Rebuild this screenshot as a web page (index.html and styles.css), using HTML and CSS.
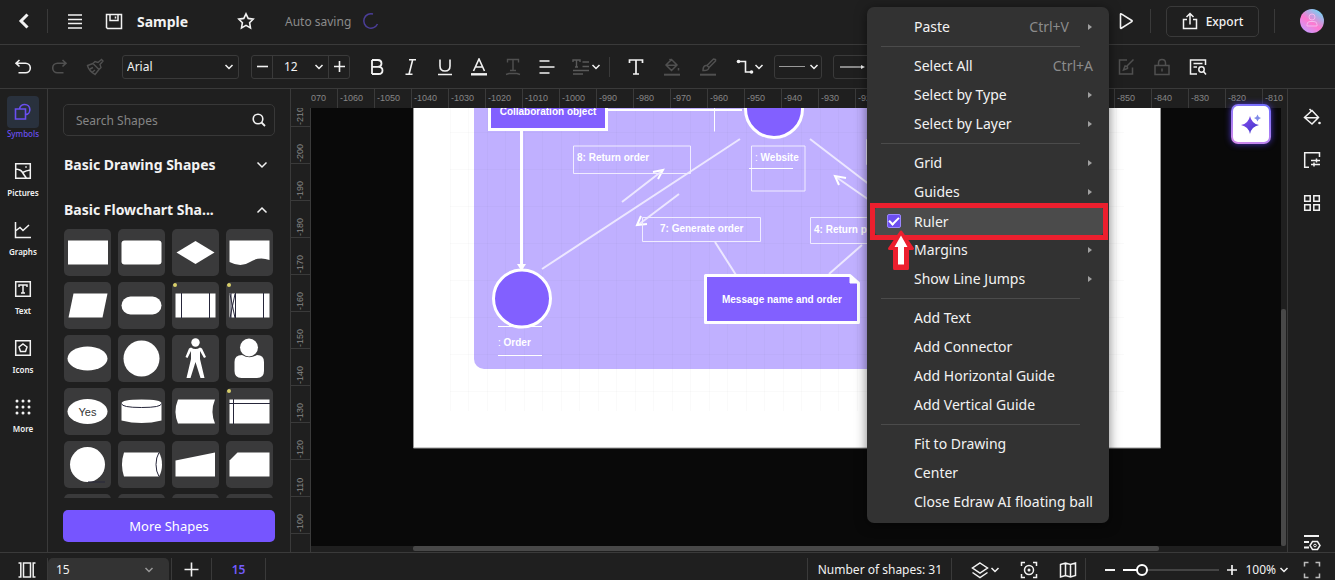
FILE: index.html
```html
<!DOCTYPE html>
<html lang="en">
<head>
<meta charset="utf-8">
<title>Sample</title>
<link rel="stylesheet" href="styles.css">
</head>
<body>
<header class="topbar">
  <button class="ib back" aria-label="Back"><svg width="14" height="16" viewBox="0 0 14 16"><path d="M10.5 1.5 4 8l6.500 6.500" stroke-width="3"/></svg></button>
  <span class="divider"></span>
  <button class="ib menu-btn" aria-label="Menu"><svg width="16" height="16" viewBox="0 0 16 16"><path d="M1 2h14M1 6.500h14M1 10.500h14M1 15h14" stroke-width="1.300"/></svg></button>
  <button class="ib" aria-label="Save"><svg width="18" height="18" viewBox="0 0 18 18"><path d="M1.500 2.500h15v14h-14l-1-1zM5 2.500v6h8v-6M10.500 4.500v2" stroke-width="1.500"/></svg></button>
  <h1 class="doc-title">Sample</h1>
  <button class="ib" aria-label="Favorite"><svg width="18" height="18" viewBox="0 0 18 18"><path d="M9 1.800 11.200 6.400l5 .7-3.600 3.600.9 5.200L9 13.400l-4.500 2.500.9-5.200L1.800 7.100l5-.7z" stroke-width="1.600"/></svg></button>
  <span class="saving">Auto saving</span>
  <svg class="spinner" width="18" height="18" viewBox="0 0 18 18"><path d="M11 2A7.200 7.200 0 1 0 15.500 12" stroke-width="1.500"/></svg>
  <div class="top-right">
    <button class="ib" aria-label="Play"><svg width="18" height="18" viewBox="0 0 18 18"><path d="M3.500 2.200v13.600q0 .8.800.4l10.500-6.600q.7-.6 0-1.100L4.300 1.900q-.8-.4-.8.300z" stroke-width="1.600"/></svg></button>
    <span class="divider"></span>
    <button class="export"><svg width="16" height="18" viewBox="0 0 16 18"><path d="M5 7.500H1.500v9h13v-9H11M8 12.500V2M4.500 5 8 1.500 11.500 5" stroke-width="1.500"/></svg>Export</button>
    <span class="divider"></span>
    <button class="avatar" aria-label="Account"><svg width="24" height="24" viewBox="0 0 24 24"><circle cx="12" cy="8" r="3"/><path d="M7 17v-1.500q0-3 3-3h4q3 0 3 3V17z"/></svg></button>
  </div>
</header>

<div class="toolbar">
  <div class="group w36">
    <button class="ib" aria-label="Undo"><svg width="18" height="18" viewBox="0 0 18 18"><path d="M5.500 2 2 5.200l3.500 3.300M2 5.200h9.500a4.800 4.800 0 0 1 0 9.600H4.500" stroke-width="1.600"/></svg></button>
    <button class="ib off" aria-label="Redo"><svg width="18" height="18" viewBox="0 0 18 18"><path d="M12.500 2 16 5.200l-3.500 3.300M16 5.200H7.500a4.800 4.800 0 0 0 0 9.600h6" stroke-width="1.600"/></svg></button>
    <button class="ib off" aria-label="Format painter"><svg width="18" height="18" viewBox="0 0 18 18"><path d="m15.500 1.500-3.500 3-3-1-2 2 6 6 2-2-1-3 3-3.500zM7 5.500 1.500 7.500q1 5 7.500 9l4-5M4 11l3-1.500M6.500 14l2.500-2" stroke-width="1.400"/></svg></button>
  </div>
  <label class="pick font-pick"><select aria-label="Font"><option>Arial</option></select><svg class="chev" width="10" height="6" viewBox="0 0 10 6"><path d="m1.500 1 3.500 3.500L8.500 1"/></svg></label>
  <div class="stepper">
    <button class="ib" aria-label="Smaller"><svg width="13" height="13" viewBox="0 0 13 13"><path d="M1 6.500h11" stroke-width="1.600"/></svg></button>
    <label class="pick"><select aria-label="Font size"><option>12</option></select><svg class="chev" width="10" height="6" viewBox="0 0 10 6"><path d="m1.500 1 3.500 3.500L8.500 1"/></svg></label>
    <button class="ib" aria-label="Larger"><svg width="13" height="13" viewBox="0 0 13 13"><path d="M1 6.500h11M6.500 1v11" stroke-width="1.600"/></svg></button>
  </div>
  <div class="group w34">
    <button class="ib" aria-label="Bold"><svg width="18" height="18" viewBox="0 0 18 18"><path d="M4 2v14M4 2h6q3.500.2 3.500 3.400T10 8.800H4h6.500q4 .2 4 3.600t-4 3.600H4" stroke-width="1.800"/></svg></button>
    <button class="ib" aria-label="Italic"><svg width="18" height="18" viewBox="0 0 18 18"><path d="M7 1.800h7M3.500 16.200h7M10.700 1.800 7 16.200" stroke-width="1.600"/></svg></button>
    <button class="ib" aria-label="Underline"><svg width="18" height="18" viewBox="0 0 18 18"><path d="M4 1.500v6.500q0 5 5 5t5-5V1.500M2 16.500h14" stroke-width="1.600"/></svg></button>
    <button class="ib" aria-label="Font color"><svg width="18" height="18" viewBox="0 0 18 18"><path d="M3.500 13 9 1l5.500 12M5.300 9h7.400" stroke-width="1.600"/><path d="M1 16.300h16" stroke-width="2.400"/></svg></button>
    <button class="ib off" aria-label="Text outline"><svg width="18" height="18" viewBox="0 0 18 18"><path d="M3.500 4.500V1.500h11v3M9 1.500v11M6 12.500h6M2 16.500l3-1h8l3 1" stroke-width="1.400"/></svg></button>
    <button class="ib" aria-label="Align"><svg width="18" height="18" viewBox="0 0 18 18"><path d="M1.500 3h10M1.500 9h15M1.500 15h10" stroke-width="1.700"/></svg></button>
  </div>
  <button class="ib spacing" aria-label="Text spacing"><svg class="dim" width="18" height="18" viewBox="0 0 18 18"><path d="M1 4V2h7v2M4.500 2v7M3 9h3M10.500 4H17M10.500 8.500H17M1 12.500h16M1 16h10" stroke-width="1.400"/></svg><svg class="chev" width="10" height="6" viewBox="0 0 10 6"><path d="m1.500 1 3.500 3.500L8.500 1"/></svg></button>
  <span class="divider short"></span>
  <div class="group w36 after">
    <button class="ib" aria-label="Text"><svg width="18" height="18" viewBox="0 0 18 18"><path d="M2.500 5V2h13v3M9 2v14M6 16h6" stroke-width="1.700"/></svg></button>
    <button class="ib off" aria-label="Fill"><svg width="18" height="18" viewBox="0 0 18 18"><path d="m6.500 1 2 2M8.500 1.500 14 7l-5.500 5.500L3 7zM3.500 7.300h10M15.500 10v2.500" stroke-width="1.500"/><path d="M1 16.700h16" stroke-width="2"/></svg></button>
    <button class="ib off" aria-label="Line color"><svg width="18" height="18" viewBox="0 0 18 18"><path d="M16.500 1.500 14.500 1 8 7.500l2 2 6.500-6.500zM8 7.500Q4 7 4 12.500q5.500.5 6-3" stroke-width="1.500"/><path d="M1 16.700h16" stroke-width="2"/></svg></button>
  </div>
  <button class="ib connector" aria-label="Connector"><svg width="18" height="16" viewBox="0 0 18 16"><path d="M3 2.500h6.500v10.500H15" stroke-width="1.600"/><circle cx="2.500" cy="2.500" r="1.800" class="solid"/><circle cx="15.500" cy="13" r="1.800" class="solid"/></svg><svg class="chev" width="10" height="6" viewBox="0 0 10 6"><path d="m1.500 1 3.500 3.500L8.500 1"/></svg></button>
  <button class="box-btn" aria-label="Line style"><svg class="mid" width="28" height="4" viewBox="0 0 28 4"><path d="M1 1.500h26" stroke-width="1"/></svg><svg class="chev" width="10" height="6" viewBox="0 0 10 6"><path d="m1.500 1 3.500 3.500L8.500 1"/></svg></button>
  <button class="box-btn second" aria-label="Arrow style"><svg width="28" height="8" viewBox="0 0 28 8"><path d="M1 4h22" stroke-width="1"/><path class="solid" d="m22 2 4 2-4 2z"/></svg></button>
  <div class="group w36 end">
    <button class="ib off" aria-label="Edit"><svg width="18" height="18" viewBox="0 0 18 18"><path d="M10 2H2.500v14h13V9.500M16.500 1.500 10 8M6.500 12l1.500-4q3 0 2.500 2.500z" stroke-width="1.500"/></svg></button>
    <button class="ib off" aria-label="Lock"><svg width="18" height="18" viewBox="0 0 18 18"><path d="M2 7.500h14v9H2zM5.500 7.500V5q0-3.500 3.500-3.500T12.500 5v2.500M9 10.500v3" stroke-width="1.500"/></svg></button>
    <button class="ib" aria-label="Find"><svg width="18" height="18" viewBox="0 0 18 18"><path d="M16.500 7V2h-15v14H8M4.500 5.500h9M4.500 9h3.500" stroke-width="1.500"/><circle cx="12.500" cy="11.500" r="2.700" stroke-width="1.500"/><path d="m14.500 13.500 2.500 3" stroke-width="1.500"/></svg></button>
  </div>
</div>

<main class="workspace">
  <nav class="rail">
    <button class="rail-item active"><span class="tile"><svg width="18" height="18" viewBox="0 0 18 18"><path d="M1.500 6h10v10h-10zM5.500 6A5.200 5.200 0 1 1 11.500 11.800" stroke-width="1.600"/></svg></span>Symbols</button>
    <button class="rail-item"><span class="tile"><svg width="18" height="18" viewBox="0 0 18 18"><path d="M1.700 1.700h14.600v14.600H1.700zM1.700 7q5 .5 6.500 3t4.300 6.300M8.500 10.500q4-2 7.800-2.500M12 4.200v1.500" stroke-width="1.500"/></svg></span>Pictures</button>
    <button class="rail-item"><span class="tile"><svg width="18" height="18" viewBox="0 0 18 18"><path d="M1.500 1v15.500H17M1.500 10 6 6.500l3 3 6-5.500" stroke-width="1.500"/></svg></span>Graphs</button>
    <button class="rail-item"><span class="tile"><svg width="18" height="18" viewBox="0 0 18 18"><path d="M1.700 1.700h14.600v14.600H1.700zM5 7V5h8v2M9 5v8M7 13h4" stroke-width="1.500"/></svg></span>Text</button>
    <button class="rail-item"><span class="tile"><svg width="18" height="18" viewBox="0 0 18 18"><path d="M1.700 1.700h14.600v14.600H1.700zM9 5l4 3-1.500 4.500h-5L5 8z" stroke-width="1.500"/></svg></span>Icons</button>
    <button class="rail-item"><span class="tile"><svg width="18" height="18" viewBox="0 0 18 18"><g class="solid"><circle cx="3" cy="3" r="1.500"/><circle cx="9" cy="3" r="1.500"/><circle cx="15" cy="3" r="1.500"/><circle cx="3" cy="9" r="1.500"/><circle cx="9" cy="9" r="1.500"/><circle cx="15" cy="9" r="1.500"/><circle cx="3" cy="15" r="1.500"/><circle cx="9" cy="15" r="1.500"/><circle cx="15" cy="15" r="1.500"/></g></svg></span>More</button>
  </nav>

  <aside class="panel">
    <label class="search"><input type="text" placeholder="Search Shapes" aria-label="Search Shapes"><svg width="14" height="14" viewBox="0 0 14 14"><circle cx="6" cy="6" r="4.800" stroke-width="1.600"/><path d="m9.500 9.500 3.500 3.500" stroke-width="1.800"/></svg></label>
    <button class="section">Basic Drawing Shapes<svg width="12" height="8" viewBox="0 0 12 8"><path d="m1.500 1.500 4.500 4.500 4.500-4.500" stroke-width="1.500"/></svg></button>
    <button class="section">Basic Flowchart Sha...<svg width="12" height="8" viewBox="0 0 12 8"><path d="m1.500 6.500 4.500-4.500 4.500 4.500" stroke-width="1.500"/></svg></button>
    <div class="shapes">
      <svg viewBox="0 0 47 47"><path d="M4 11.500h40v24H4z"/></svg>
      <svg viewBox="0 0 47 47"><rect x="3.500" y="11.500" width="40" height="24" rx="3"/></svg>
      <svg viewBox="0 0 47 47"><path d="M4.500 23.500 23.500 12l19 11.500L23.500 35z"/></svg>
      <svg viewBox="0 0 47 47"><path d="M3.500 11.500h40V31Q33 27 24 33t-20.500 0z"/></svg>
      <svg viewBox="0 0 47 47"><path d="M9.500 11.500h34l-5 24h-34z"/></svg>
      <svg viewBox="0 0 47 47"><rect x="3.500" y="14.500" width="40" height="18" rx="9"/></svg>
      <svg viewBox="0 0 47 47"><circle class="dot" cx="3" cy="3" r="2"/><path d="M3.500 11.500h40v24h-40z"/><path class="ink" d="M9.500 11v25M37.500 11v25"/></svg>
      <svg viewBox="0 0 47 47"><circle class="dot" cx="3" cy="3" r="2"/><path d="M3.500 11.500h40v24h-40z"/><path class="ink" d="M9.500 11v25M37.500 11v25M4 12l5 24M9 12 4 36M5 11v25"/></svg>
      <svg viewBox="0 0 47 47"><ellipse cx="23.500" cy="23.500" rx="20" ry="12"/></svg>
      <svg viewBox="0 0 47 47"><circle cx="23.500" cy="23.500" r="18"/></svg>
      <svg viewBox="0 0 47 47"><circle cx="23.500" cy="7.500" r="4.200"/><path d="M19 12.500q4.500 3 9 0l2 1 4 8.500-2 1-4-7v8l4.500 19h-4l-5-16-5 16h-4L19 24v-8l-3.500 7-2-1 3.500-8.500z"/></svg>
      <svg viewBox="0 0 47 47"><path d="M16 20q7.500 4.500 15 0 7 0 7 7v9q0 7-7 7H15.500q-7 0-7-7v-9q0-7 7.500-7z"/><circle cx="23" cy="12.500" r="9"/></svg>
      <svg viewBox="0 0 47 47"><ellipse cx="23.500" cy="23.500" rx="20" ry="12.500"/><text class="yes" x="23.500" y="27.500">Yes</text></svg>
      <svg viewBox="0 0 47 47"><path d="M3.500 15.500q0-4 20-4t20 4v17q-20 5-40 0z"/><path class="ink" d="M3.500 15.500q0 4 20 4t20-4"/></svg>
      <svg viewBox="0 0 47 47"><path d="M6 11.500h37q-5 12 0 24H6q-5-12 0-24z"/></svg>
      <svg viewBox="0 0 47 47"><circle class="dot" cx="3" cy="3" r="2"/><path d="M3.500 11.500h40v24h-40z"/><path class="ink" d="M7.500 11v25M3 15.500h41"/></svg>
      <svg viewBox="0 0 47 47"><circle cx="23.500" cy="23.500" r="17.500"/><path class="ink" d="M24 41h17"/></svg>
      <svg viewBox="0 0 47 47"><path d="M6 11.500h35q3 5 3 12t-3 12H6q-4-12 0-24z"/><path class="ink" d="M41 11.500q-3 5-3 12t3 12"/></svg>
      <svg viewBox="0 0 47 47"><path d="M3.500 19.500 43 11.500v24H3.500z"/></svg>
      <svg viewBox="0 0 47 47"><path d="m3.500 19.500 8-8h32v24h-40z"/></svg>
      <svg viewBox="0 0 47 47"></svg><svg viewBox="0 0 47 47"></svg><svg viewBox="0 0 47 47"></svg><svg viewBox="0 0 47 47"></svg>
    </div>
    <button class="more-shapes">More Shapes</button>
  </aside>

  <section class="stage">
    <div class="ruler-h"><span>070</span><span>-1060</span><span>-1050</span><span>-1040</span><span>-1030</span><span>-1020</span><span>-1010</span><span>-1000</span><span>-990</span><span>-980</span><span>-970</span><span>-960</span><span>-950</span><span>-940</span><span>-930</span><span>-920</span><span>-910</span><span>-900</span><span>-890</span><span>-880</span><span>-870</span><span>-860</span><span>-850</span><span>-840</span><span>-830</span><span>-820</span><span>-810</span></div>
    <div class="ruler-v"><span>-210</span><span>-200</span><span>-190</span><span>-180</span><span>-170</span><span>-160</span><span>-150</span><span>-140</span><span>-130</span><span>-120</span><span>-110</span><span>-100</span><span></span></div>
    <div class="canvas">
      <svg class="drawing" role="img" aria-label="Collaboration diagram">
        <defs><pattern id="grid" width="37" height="37" patternUnits="userSpaceOnUse" x="450" y="132"><path d="M.5 0v37M0 .5h37M18.500 0v37" stroke="#000" stroke-opacity=".018" fill="none"/></pattern></defs>
        <g transform="translate(-311 -108)">
          <path d="M413.500 90v358h747V90z" fill="#fff" stroke="#999"/>
          <rect x="474" y="80" width="616" height="289" rx="10" fill="#c0b0ff"/>
          <rect x="450" y="95" width="674" height="316" fill="url(#grid)"/>
          <g stroke="#ece7ff" stroke-width="2" fill="none">
            <path d="M542 269 740 139M622 202l40-31M679 194l-41 31M715 242l21 33M829 274l33-29M810 139l60 46M836 177l36 25"/>
            <path d="M653 172l10-2-5 9M641 216l-4 9 10-1M846 178l-11-2 4 9" stroke="#fff"/>
          </g>
          <path d="M608 110h134" stroke="#fff" stroke-width="2"/>
          <path d="M714.500 108v23.500" stroke="#fff"/>
          <g fill="none" stroke="#f0ecff" stroke-width="1">
            <path d="M573.500 146h117v27.500h-117zM751.500 146h53.500v45h-53.500zM642.500 217.500h118v24h-118zM810.500 217.500h100v26h-100zM866.500 139.500h90v25h-90z"/>
            <path d="M749 168.500h44M498 326.500h44M498 355.500h44" stroke="#fff"/>
          </g>
          <rect x="489.500" y="80" width="117" height="49.500" fill="#8260ff" stroke="#fff" stroke-width="3"/>
          <circle cx="774" cy="109" r="28.500" fill="#8260ff" stroke="#fff" stroke-width="3"/>
          <path d="M521.500 131v135" stroke="#fff" stroke-width="3"/><path d="M517 264h9l-4.500 7z" fill="#fff"/>
          <circle cx="522" cy="298.500" r="28.500" fill="#8260ff" stroke="#fff" stroke-width="3"/>
          <path d="M705.500 275.500H850l8.500 7.500v39.500h-153z" fill="#8260ff" stroke="#fff" stroke-width="3" stroke-linejoin="round"/>
          <path d="M850 275v8h9z" fill="#fff" stroke="#fff" stroke-linejoin="round"/>
          <g class="labels">
            <text x="548" y="115" text-anchor="middle">Collaboration object</text>
            <text x="577" y="161">8: Return order</text>
            <text x="755" y="161"><tspan class="reg">:</tspan> Website</text>
            <text x="660" y="232">7: Generate order</text>
            <text x="814" y="233">4: Return product</text>
            <text x="498" y="346"><tspan class="reg">:</tspan> Order</text>
            <text x="782" y="303" text-anchor="middle">Message name and order</text>
          </g>
        </g>
      </svg>
      <button class="ai" aria-label="AI assistant"><svg width="36" height="36" viewBox="0 0 36 36"><defs><linearGradient id="spark" x1="0" y1="0" x2="1" y2="1"><stop offset="0" stop-color="#8a4df0"/><stop offset="1" stop-color="#3a35c8"/></linearGradient></defs><path fill="url(#spark)" d="M17 10q1.500 7.500 9 9-7.500 1.500-9 9-1.500-7.500-9-9 7.500-1.500 9-9z"/><path fill="#7f8be8" d="M24.500 8.500q.7 3 3.500 3.500-2.800.5-3.500 3.500-.7-3-3.500-3.500 2.800-.5 3.500-3.500z"/></svg></button>
    </div>
    <div class="scroll-v"><i></i></div>
    <div class="scroll-h"><i></i></div>
  </section>

  <aside class="side">
    <button class="ib" aria-label="Fill"><svg width="18" height="18" viewBox="0 0 18 18"><path d="m6.500 1 2.500 2.500M9 2.500 15.500 9.500 9 16 1.500 9.500zM2 9.800h13" stroke-width="1.500"/><circle cx="16.500" cy="15" r="1.300" class="solid"/></svg></button>
    <button class="ib" aria-label="Page settings"><svg width="18" height="18" viewBox="0 0 18 18"><path d="M16.500 6V1.700H1.700v14.600H6M8 9.500h9M8 13.500h9M13.500 7.500v4M11 11.500v4" stroke-width="1.500"/></svg></button>
    <button class="ib" aria-label="Components"><svg width="18" height="18" viewBox="0 0 18 18"><path d="M1.700 1.700h5.500v5.500H1.700zM10.800 1.700h5.500v5.500h-5.500zM1.700 10.800h5.500v5.500H1.700zM10.800 10.800h5.500v5.500h-5.500z" stroke-width="1.500"/></svg></button>
    <button class="ib last" aria-label="Settings"><svg width="18" height="18" viewBox="0 0 18 18"><path d="M1 2h15M1 8h5M1 13.500h5" stroke-width="1.800"/><path d="M9.500 7.500h5l2.500 4-2.500 4h-5l-2.500-4z" stroke-width="1.500"/><circle cx="12" cy="11.500" r="1.300"/></svg></button>
  </aside>
</main>

<footer class="status">
  <button class="ib pages" aria-label="Pages"><svg width="18" height="18" viewBox="0 0 18 18"><path d="M5.500 2h7v14h-7zM.5 2h2.300v14H.5M17.500 2h-2.300v14h2.300" stroke-width="1.500"/></svg></button>
  <span class="divider"></span>
  <label class="pick page-pick"><select aria-label="Page"><option>15</option></select><svg class="chev" width="10" height="6" viewBox="0 0 10 6"><path d="m1.500 1 3.500 3.500L8.500 1"/></svg></label>
  <span class="divider gap2"></span>
  <button class="ib add" aria-label="Add page"><svg width="15" height="15" viewBox="0 0 15 15"><path d="M.5 7.500h14M7.500.5v14" stroke-width="1.600"/></svg></button>
  <span class="divider"></span>
  <button class="tab">15</button>
  <span class="divider"></span>
  <div class="status-right">
    <span class="divider"></span>
    <span class="count">Number of shapes: 31</span>
    <span class="divider"></span>
    <button class="ib layers" aria-label="Layers"><svg width="18" height="18" viewBox="0 0 18 18"><path d="M9 2 16.500 7 9 12 1.500 7zM1.500 11.500 9 16.500l7.500-5" stroke-width="1.500"/></svg><svg class="chev" width="10" height="6" viewBox="0 0 10 6"><path d="m1.500 1 3.500 3.500L8.500 1"/></svg></button>
    <button class="ib" aria-label="Focus"><svg width="18" height="18" viewBox="0 0 18 18"><path d="M1.500 5V1.500H5M13 1.500h3.500V5M16.500 13v3.500H13M5 16.500H1.500V13" stroke-width="1.500"/><circle cx="9" cy="9" r="4.500" stroke-width="1.500"/><circle cx="9" cy="9" r="1.500" class="solid"/></svg></button>
    <button class="ib" aria-label="Overview"><svg width="18" height="18" viewBox="0 0 18 18"><path d="m1.500 3.500 5-1.500 5 1.500 5-1.500v12.500l-5 1.500-5-1.500-5 1.500zM6.500 2v12.500M11.500 3.500V16" stroke-width="1.500"/></svg></button>
    <span class="divider"></span>
    <div class="zoom">
      <button class="ib" aria-label="Zoom out"><svg width="10" height="10" viewBox="0 0 10 10"><path d="M0 5h10" stroke-width="2"/></svg></button>
      <input class="slider" type="range" min="0" max="100" value="15" aria-label="Zoom">
      <button class="ib" aria-label="Zoom in"><svg width="10" height="10" viewBox="0 0 10 10"><path d="M0 5h10M5 0v10" stroke-width="1.700"/></svg></button>
      <button class="ib pct">100%<svg class="chev" width="10" height="6" viewBox="0 0 10 6"><path d="m1.500 1 3.500 3.500L8.500 1"/></svg></button>
    </div>
    <button class="ib full" aria-label="Full screen"><svg width="18" height="18" viewBox="0 0 18 18"><path d="M1.500 5.500v-4h4M12.500 1.500h4v4M16.500 12.500v4h-4M5.500 16.500h-4v-4" stroke-width="1.500"/></svg></button>
  </div>
</footer>

<div class="context" role="menu">
  <button role="menuitem"><span>Paste</span><kbd>Ctrl+V</kbd><i></i></button>
  <hr>
  <button role="menuitem"><span>Select All</span><kbd>Ctrl+A</kbd></button>
  <button role="menuitem"><span>Select by Type</span><i></i></button>
  <button role="menuitem"><span>Select by Layer</span><i></i></button>
  <hr>
  <button role="menuitem"><span>Grid</span><i></i></button>
  <button role="menuitem"><span>Guides</span><i></i></button>
  <label class="ruler-item"><span class="hover"><input type="checkbox" checked><span>Ruler</span></span><b class="callout"></b>
    <svg class="pointer" width="30" height="44" viewBox="0 0 30 44"><path d="M15 3 26.500 19.500H21.500V39.500H8.500V19.500H3.500z" fill="#ec1f2e" stroke="#ec1f2e" stroke-width="3" stroke-linejoin="round"/><path d="m15 6.500 6.500 11.500h-3.500v17.500h-6V18H8.500z" fill="#fff"/></svg></label>
  <button role="menuitem"><span>Margins</span><i></i></button>
  <button role="menuitem"><span>Show Line Jumps</span><i></i></button>
  <hr>
  <button role="menuitem"><span>Add Text</span></button>
  <button role="menuitem"><span>Add Connector</span></button>
  <button role="menuitem"><span>Add Horizontal Guide</span></button>
  <button role="menuitem"><span>Add Vertical Guide</span></button>
  <hr>
  <button role="menuitem"><span>Fit to Drawing</span></button>
  <button role="menuitem"><span>Center</span></button>
  <button role="menuitem"><span>Close Edraw AI floating ball</span></button>
</div>
</body>
</html>
```
FILE: styles.css
```css
:root {
  --bg: #1f1f1f;
  --line: #3a3a3a;
  --text: #f2f2f2;
  --accent: #7655ff;
}
* { box-sizing: border-box; }
body {
  margin: 0;
  height: 100vh;
  overflow: hidden;
  display: flex;
  flex-direction: column;
  background: var(--bg);
  color: var(--text);
  font-family: "Noto Sans", "Open Sans", sans-serif;
  font-size: 13px;
}
button, input, select { font: inherit; color: inherit; }
button { border: 0; padding: 0; background: none; }
svg { flex: none; display: block; }
svg path, svg circle { fill: none; stroke: currentColor; }
svg .solid, svg .solid circle { fill: currentColor; stroke: none; }
.chev path { stroke-width: 1.5px; }
.ib { display: flex; align-items: center; justify-content: center; flex: none; }
.off { color: #505050; }
.dim { color: #5a5a5a; }
.divider { flex: none; width: 1px; height: 24px; background: var(--line); }

/* Title bar */
.topbar {
  flex: none;
  display: flex;
  align-items: center;
  height: 45px;
  padding-bottom: 2px;
  border-bottom: 1px solid var(--line);
}
.back { width: 47px; }
.menu-btn { width: 54px; }
.topbar > .ib:nth-of-type(3) { width: 24px; }
.doc-title { margin: 0 0 0 11px; width: 100px; font-size: 14px; font-weight: 700; }
.saving { margin-left: 30px; width: 77px; color: #8b8b8b; font-size: 12px; }
.spinner { color: #4b3e98; }
.top-right { display: flex; align-items: center; gap: 15px; margin-left: auto; padding-right: 11px; }
.export {
  display: flex;
  align-items: center;
  justify-content: center;
  gap: 8px;
  width: 93px;
  height: 31px;
  border: 1px solid var(--line);
  border-radius: 5px;
  font-size: 12px;
  font-weight: 500;
}
.avatar { margin-left: 10px; border-radius: 50%; background: linear-gradient(35deg, #c79bff 10%, #ff79d0 45%, #6fd6f5 90%); color: #f5b8ee; }

/* Toolbar */
.toolbar {
  flex: none;
  display: flex;
  align-items: center;
  height: 44px;
  padding-left: 5px;
  border-bottom: 1px solid var(--line);
}
.group { display: flex; flex: none; }
.w36 .ib { width: 36px; }
.w34 { margin-left: 10px; }
.w34 .ib { width: 34px; }
.after { margin-left: 8px; }
.end { margin-left: auto; padding-right: 119px; }
.pick { position: relative; display: flex; align-items: center; }
.pick select { appearance: none; width: 100%; border: 0; background: none; padding: 0 0 0 4px; outline: 0; font-size: 12px; line-height: 20px; }
.pick .chev { position: absolute; right: 4px; }
.font-pick { width: 117px; height: 24px; margin-left: 9px; border: 1px solid var(--line); border-radius: 3px; }
.stepper { display: flex; height: 24px; margin-left: 12px; border: 1px solid var(--line); border-radius: 3px; }
.stepper .ib { width: 20px; }
.stepper .pick { width: 57px; border: solid var(--line); border-width: 0 1px; }
.stepper select { padding-left: 11px; }
.spacing { width: 45px; gap: 1px; }
.short { height: 20px; }
.connector { width: 48px; }
.box-btn { flex: none; display: flex; align-items: center; justify-content: center; gap: 3px; width: 48px; height: 24px; border: 1px solid var(--line); border-radius: 3px; }
.mid { color: #999; }
.second { margin-left: 11px; justify-content: start; padding-left: 5px; }

/* Workspace */
.workspace { flex: 1; min-height: 0; display: flex; }
.rail { flex: none; width: 48px; padding: 7px 1px 0 0; display: flex; flex-direction: column; align-items: center; gap: 16px; border-right: 1px solid var(--line); }
.rail-item { display: flex; flex-direction: column; align-items: center; font-size: 8px; font-weight: 600; line-height: 11px; }
.tile { display: grid; place-items: center; width: 32px; height: 32px; border-radius: 4px; }
.active { color: #6a4ff0; font-weight: 500; }
.active .tile { background: #29313d; }
.panel { flex: none; width: 243px; padding: 15px 15px 10px; display: flex; flex-direction: column; border-right: 1px solid var(--line); }
.search { flex: none; display: flex; align-items: center; height: 32px; padding: 0 8px 0 12px; border: 1px solid #383838; border-radius: 5px; }
.search input { flex: 1; min-width: 0; padding: 0; border: 0; outline: 0; background: none; font-size: 12px; }
.search input::placeholder { color: #858585; opacity: 1; }
.section { flex: none; display: flex; align-items: center; justify-content: space-between; height: 45px; padding: 0 7px 0 1px; font-size: 14px; font-weight: 700; }
.search + .section { margin-top: 6px; }
.shapes { flex: 1; min-height: 0; overflow: hidden; display: grid; grid-template-columns: repeat(4, 47px); grid-auto-rows: 47px; gap: 6px 7px; padding-left: 1px; margin-bottom: 12px; margin-top: -3px; }
.shapes svg { width: 47px; height: 47px; border-radius: 5px; background: #3a3a3b; fill: #fff; }
.shapes path, .shapes circle { fill: #fff; stroke: none; }
.shapes .ink { fill: none; stroke: #26263a; stroke-width: 1; }
.shapes .dot { fill: #d9cf6a; }
.yes { fill: #333; font: 11px "Liberation Sans", sans-serif; text-anchor: middle; }
.more-shapes { flex: none; height: 32px; border-radius: 5px; background: var(--accent); color: #fff; }

/* Rulers and canvas */
.stage {
  flex: 1;
  min-width: 0;
  display: grid;
  grid-template-columns: 20px minmax(0, 1fr) 6px;
  grid-template-rows: 19px minmax(0, 1fr) 6px;
}
.ruler-h, .ruler-v { color: #868686; font: 9px/18px "Liberation Sans", sans-serif; overflow: hidden; display: flex; }
.ruler-h { grid-column: 2 / 4; }
.ruler-h span { flex: none; width: 37px; padding-left: 2px; border-right: 1px solid var(--line); }
.ruler-h span:first-child { width: 27px; padding-left: 0; }
.ruler-v { grid-column: 1; grid-row: 2 / 4; flex-direction: column; border-right: 1px solid var(--line); }
.ruler-v span { flex: none; height: 37px; padding-top: 1px; writing-mode: vertical-rl; transform: rotate(180deg); border-top: 1px solid var(--line); }
.ruler-v span:first-child { height: 19px; }
.canvas { grid-column: 2; grid-row: 2; position: relative; background: #090909; }
.drawing { width: 100%; height: 100%; overflow: hidden; }
.drawing path, .drawing circle, .ai path, .pointer path { fill: revert-layer; stroke: revert-layer; }
.labels { fill: #fff; font: bold 10px "Liberation Sans", sans-serif; }
.reg { font-weight: 400; }
.scroll-v { grid-column: 3; grid-row: 2; display: flex; align-items: flex-end; }
.scroll-v i { width: 5px; height: 54%; border-radius: 2px; background: #484848; }
.scroll-h { grid-column: 2; grid-row: 3; padding-left: 102px; }
.scroll-h i { display: block; width: 86%; height: 5px; border-radius: 2px; background: #484848; }
.ai {
  position: absolute;
  top: -4px;
  right: 10px;
  border: 2px solid transparent;
  border-radius: 7px;
  background: linear-gradient(#fff, #fff) padding-box, linear-gradient(20deg, #d68bea, #6c6cff) border-box;
  box-shadow: 0 0 6px #4734c0;
}
.side { flex: none; width: 48px; display: flex; flex-direction: column; align-items: center; gap: 25px; padding: 19px 0 0; border-left: 1px solid var(--line); }
.last { margin-top: auto; }

/* Status bar */
.status { flex: none; display: flex; align-items: center; height: 28px; padding-top: 6px; border-top: 1px solid var(--line); font-size: 12px; }
.pages { width: 47px; padding-left: 6px; }
.page-pick { width: 121px; height: 24px; border-radius: 5px 5px 0 0; background: #333; }
.page-pick select { padding-left: 8px; }
.page-pick .chev { right: 15px; color: #999; }
.gap2 { margin-left: 2px; }
.add { width: 39px; }
.tab { width: 53px; color: #735cff; font-weight: 600; }
.status-right { display: flex; align-items: center; margin-left: auto; padding-right: 14px; }
.count { width: 143px; text-align: center; }
.layers { width: 47px; gap: 1px; margin: 0 11px 0 10px; }
.status-right > .layers + .ib { margin-right: 21px; }
.status-right > .layers + .ib + .ib { margin-right: 8px; }
.zoom { display: flex; align-items: center; gap: 8px; padding-left: 19px; }
.slider { appearance: none; width: 96px; height: 12px; margin: 0; background: linear-gradient(90deg, #fff 15%, #444 15%) center / 100% 2px no-repeat; }
.slider::-webkit-slider-thumb { appearance: none; width: 12px; height: 12px; border: 2px solid #fff; border-radius: 50%; background: var(--bg); }
.pct { gap: 3px; }
.full { margin-left: 14px; color: #bbb; }

/* Context menu */
.context {
  position: absolute;
  left: 867px;
  top: 7px;
  width: 242px;
  padding: 5px 0 7px;
  border-radius: 7px;
  background: #323232;
  box-shadow: 0 2px 12px rgba(0, 0, 0, .5);
  font-size: 14px;
}
.context button { display: flex; align-items: center; width: 100%; height: 29px; padding: 0 16px 0 47px; text-align: left; white-space: nowrap; }
.context kbd { margin-left: auto; font: inherit; color: #8c8c8c; }
.context i { margin: 0 1px 0 auto; border: solid transparent; border-width: 3px 0 3px 4px; border-left-color: #a0a0a0; }
.context kbd + i { margin-left: 19px; }
.context hr { margin: 5px 29px 4px 14px; border: 0; height: 1px; background: #4b4b4b; }
.ruler-item { position: relative; display: block; height: 29px; padding: 1px 6px 0 8px; }
.hover { display: flex; align-items: center; gap: 13px; height: 28px; padding-left: 12px; border-radius: 3px; background: #4b4b4b; }
.hover input {
  appearance: none;
  width: 14px;
  height: 14px;
  margin: 0;
  display: grid;
  place-items: center;
  border: 1px solid #9a86ff;
  border-radius: 2px;
  background: #6c4ef0;
}
.hover input::before { content: ""; width: 8px; height: 4px; border: solid #fff; border-width: 0 0 2px 2px; transform: rotate(-45deg); margin-bottom: 2px; }
.callout { position: absolute; inset: -3px 1px -5px 3px; border: 5px solid #ec1f2e; }
.pointer { position: absolute; left: 19px; top: 23px; z-index: 1; }
```
